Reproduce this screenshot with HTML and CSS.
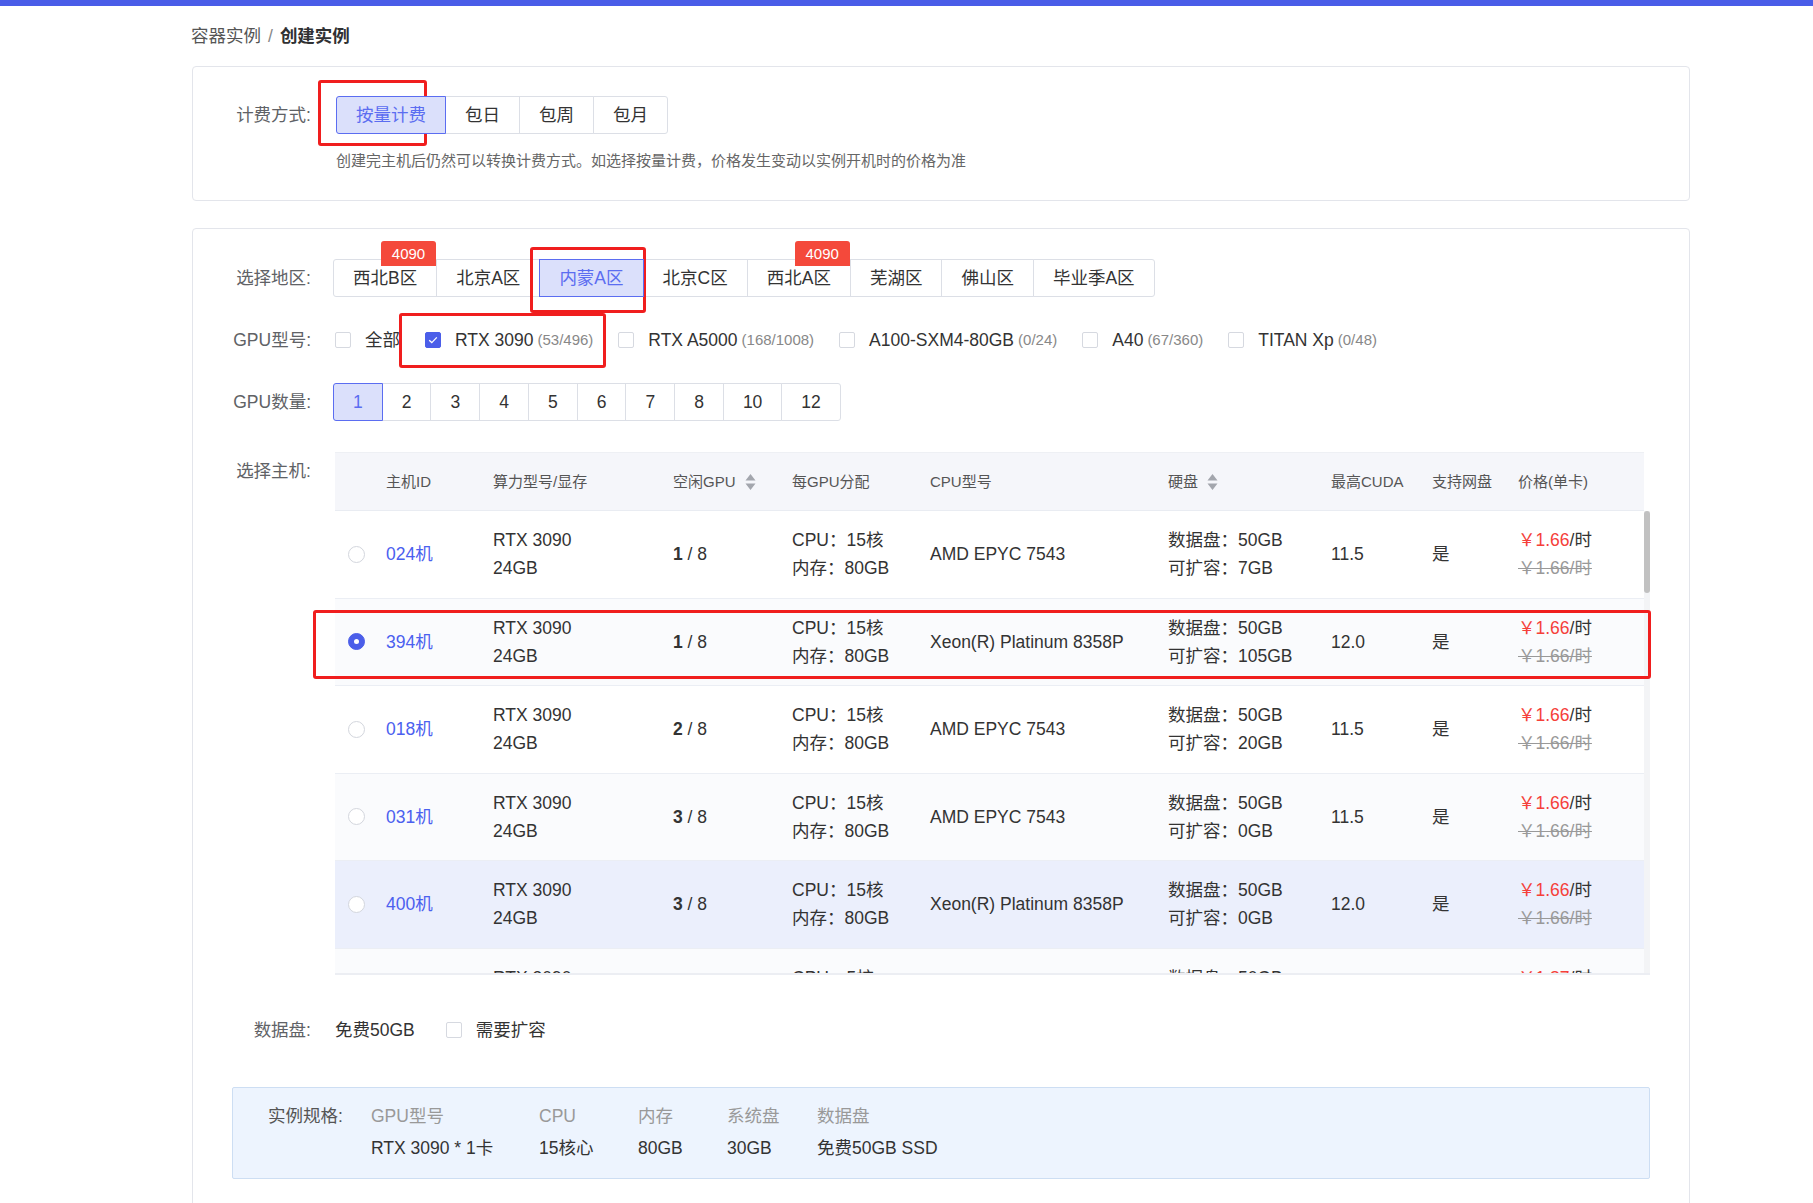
FILE: index.html
```html
<!DOCTYPE html>
<html lang="zh-CN">
<head>
<meta charset="utf-8">
<title>创建实例</title>
<link rel="stylesheet" href="styles.css">
</head>
<body>
<div class="topbar"></div>
<div class="page">
  <div class="breadcrumb"><span>容器实例</span><span class="sep">/</span><span class="cur">创建实例</span></div>

  <div class="card card-billing">
    <div class="form-row">
      <div class="form-label">计费方式:</div>
      <div class="form-content">
        <div class="btn-group">
          <span class="btn active">按量计费</span><span class="btn">包日</span><span class="btn">包周</span><span class="btn">包月</span>
        </div>
        <div class="note">创建完主机后仍然可以转换计费方式。如选择按量计费，价格发生变动以实例开机时的价格为准</div>
      </div>
    </div>
  </div>

  <div class="card card-main">
    <div class="form-row row-gap">
      <div class="form-label">选择地区:</div>
      <div class="btn-group">
        <span class="btn">西北B区<span class="badge">4090</span></span><span class="btn">北京A区</span><span class="btn active">内蒙A区</span><span class="btn">北京C区</span><span class="btn">西北A区<span class="badge">4090</span></span><span class="btn">芜湖区</span><span class="btn">佛山区</span><span class="btn">毕业季A区</span>
      </div>
    </div>

    <div class="form-row row-gap">
      <div class="form-label">GPU型号:</div>
      <div class="check-row">
        <label class="check"><span class="box"></span>全部</label>
        <label class="check"><span class="box checked"><svg width="10" height="8" viewBox="0 0 10 8"><path d="M1.2 4.2 L3.8 6.6 L8.8 1.4" fill="none" stroke="#fff" stroke-width="1.3"/></svg></span>RTX 3090<span class="count">(53/496)</span></label>
        <label class="check"><span class="box"></span>RTX A5000<span class="count">(168/1008)</span></label>
        <label class="check"><span class="box"></span>A100-SXM4-80GB<span class="count">(0/24)</span></label>
        <label class="check"><span class="box"></span>A40<span class="count">(67/360)</span></label>
        <label class="check"><span class="box"></span>TITAN Xp<span class="count">(0/48)</span></label>
      </div>
    </div>

    <div class="form-row row-gap-lg">
      <div class="form-label">GPU数量:</div>
      <div class="btn-group">
        <span class="btn active">1</span><span class="btn">2</span><span class="btn">3</span><span class="btn">4</span><span class="btn">5</span><span class="btn">6</span><span class="btn">7</span><span class="btn">8</span><span class="btn">10</span><span class="btn">12</span>
      </div>
    </div>

    <div class="form-row row-gap-table">
      <div class="form-label">选择主机:</div>
      <div class="table">
        <div class="thead">
          <div></div>
          <div>主机ID</div>
          <div>算力型号/显存</div>
          <div class="sortable">空闲GPU<svg class="sort" width="11" height="18" viewBox="0 0 11 18"><path d="M5.5 1 L10.5 7.5 L0.5 7.5 Z M5.5 17 L10.5 10.5 L0.5 10.5 Z" fill="#a3a6ad"/></svg></div>
          <div>每GPU分配</div>
          <div>CPU型号</div>
          <div class="sortable">硬盘<svg class="sort" width="11" height="18" viewBox="0 0 11 18"><path d="M5.5 1 L10.5 7.5 L0.5 7.5 Z M5.5 17 L10.5 10.5 L0.5 10.5 Z" fill="#a3a6ad"/></svg></div>
          <div>最高CUDA</div>
          <div>支持网盘</div>
          <div>价格(单卡)</div>
        </div>
        <div class="tbody-wrap">
          <div class="tbody">
            <div class="tr">
              <div><span class="radio"></span></div>
              <div class="link">024机</div>
              <div>RTX 3090<br>24GB</div>
              <div><b>1</b> / 8</div>
              <div>CPU：15核<br>内存：80GB</div>
              <div>AMD EPYC 7543</div>
              <div>数据盘：50GB<br>可扩容：7GB</div>
              <div>11.5</div>
              <div>是</div>
              <div><span class="price">￥1.66</span>/时<br><s class="old">￥1.66/时</s></div>
            </div>
            <div class="tr stripe">
              <div><span class="radio on"></span></div>
              <div class="link">394机</div>
              <div>RTX 3090<br>24GB</div>
              <div><b>1</b> / 8</div>
              <div>CPU：15核<br>内存：80GB</div>
              <div>Xeon(R) Platinum 8358P</div>
              <div>数据盘：50GB<br>可扩容：105GB</div>
              <div>12.0</div>
              <div>是</div>
              <div><span class="price">￥1.66</span>/时<br><s class="old">￥1.66/时</s></div>
            </div>
            <div class="tr">
              <div><span class="radio"></span></div>
              <div class="link">018机</div>
              <div>RTX 3090<br>24GB</div>
              <div><b>2</b> / 8</div>
              <div>CPU：15核<br>内存：80GB</div>
              <div>AMD EPYC 7543</div>
              <div>数据盘：50GB<br>可扩容：20GB</div>
              <div>11.5</div>
              <div>是</div>
              <div><span class="price">￥1.66</span>/时<br><s class="old">￥1.66/时</s></div>
            </div>
            <div class="tr stripe">
              <div><span class="radio"></span></div>
              <div class="link">031机</div>
              <div>RTX 3090<br>24GB</div>
              <div><b>3</b> / 8</div>
              <div>CPU：15核<br>内存：80GB</div>
              <div>AMD EPYC 7543</div>
              <div>数据盘：50GB<br>可扩容：0GB</div>
              <div>11.5</div>
              <div>是</div>
              <div><span class="price">￥1.66</span>/时<br><s class="old">￥1.66/时</s></div>
            </div>
            <div class="tr hover">
              <div><span class="radio"></span></div>
              <div class="link">400机</div>
              <div>RTX 3090<br>24GB</div>
              <div><b>3</b> / 8</div>
              <div>CPU：15核<br>内存：80GB</div>
              <div>Xeon(R) Platinum 8358P</div>
              <div>数据盘：50GB<br>可扩容：0GB</div>
              <div>12.0</div>
              <div>是</div>
              <div><span class="price">￥1.66</span>/时<br><s class="old">￥1.66/时</s></div>
            </div>
            <div class="tr stripe">
              <div><span class="radio"></span></div>
              <div class="link">052机</div>
              <div>RTX 3090<br>24GB</div>
              <div><b>4</b> / 8</div>
              <div>CPU：5核<br>内存：30GB</div>
              <div>AMD EPYC 7543</div>
              <div>数据盘：50GB<br>可扩容：0GB</div>
              <div>11.5</div>
              <div>是</div>
              <div><span class="price">￥1.87</span>/时<br><s class="old">￥1.87/时</s></div>
            </div>
          </div>
          <div class="vscroll"><div class="thumb"></div></div>
        </div>
      </div>
    </div>

    <div class="form-row">
      <div class="form-label">数据盘:</div>
      <div class="disk">
        <span>免费50GB</span>
        <label class="check disk-check"><span class="box"></span>需要扩容</label>
      </div>
    </div>

    <div class="spec">
      <div class="spec-label">实例规格:</div>
      <div class="spec-grid">
        <div class="k">GPU型号</div><div class="k">CPU</div><div class="k">内存</div><div class="k">系统盘</div><div class="k">数据盘</div>
        <div>RTX 3090 * 1卡</div><div>15核心</div><div>80GB</div><div>30GB</div><div>免费50GB SSD</div>
      </div>
    </div>
  </div>
</div>

<div class="mark mark-billing"></div>
<div class="mark mark-region"></div>
<div class="mark mark-gpu"></div>
<div class="mark mark-row"></div>
</body>
</html>
```

FILE: styles.css
```css
* { box-sizing: border-box; }
html, body { margin: 0; padding: 0; overflow: hidden; }
body {
  position: relative;
  width: 1813px;
  height: 1203px;
  background: #fff;
  color: #333;
  font-family: "Liberation Sans", "Noto Sans CJK SC", sans-serif;
  font-size: 17.5px;
  line-height: 1.6;
}
.topbar { height: 6px; background: #4a5de8; }
.page { width: 1498px; margin-left: 192px; }

.breadcrumb {
  margin-top: 18px;
  height: 24px;
  line-height: 24px;
  margin-left: -1px;
  color: #555;
}
.breadcrumb .sep { color: #888; margin: 0 7px; }
.breadcrumb .cur { font-weight: bold; color: #303133; }

.card {
  border: 1px solid #e3e5eb;
  border-radius: 4px;
  padding: 29px 40px;
}
.card-billing { margin-top: 18px; }
.card-main { margin-top: 27px; padding-top: 30px; }

.form-row { display: flex; align-items: flex-start; }
.row-gap { margin-bottom: 24px; }
.row-gap-lg { margin-bottom: 31px; }
.row-gap-table { margin-bottom: 36px; }
.form-label {
  flex: 0 0 102px;
  padding-right: 24px;
  text-align: right;
  line-height: 38px;
  color: #606266;
  white-space: nowrap;
}
.form-content { display: flex; flex-direction: column; }

.btn-group { display: flex; }
.btn {
  position: relative;
  height: 38px;
  line-height: 36px;
  padding: 0 19px;
  border: 1px solid #dcdfe6;
  background: #fff;
  color: #333;
  margin-left: -1px;
  white-space: nowrap;
}
.btn:first-child { margin-left: 0; border-radius: 3px 0 0 3px; }
.btn:last-child { border-radius: 0 3px 3px 0; }
.btn.active {
  background: #dbe0fb;
  border-color: #5b6df1;
  color: #5b6df1;
  z-index: 1;
}
.card-billing .btn-group { margin-left: 1px; }
.note {
  margin-top: 17px;
  font-size: 15px;
  line-height: 20px;
  color: #666;
  margin-left: 1px;
}

.badge {
  position: absolute;
  right: 0;
  top: -19px;
  height: 25px;
  line-height: 25px;
  padding: 0 11px;
  background: #f4493b;
  color: #fff;
  font-size: 15px;
  border-radius: 3px 3px 0 0;
}
.card-main .btn-group { margin-left: -2px; }

.check-row { display: flex; align-items: center; height: 38px; }
.check { display: flex; align-items: center; margin-right: 25px; white-space: nowrap; color: #333; }
.box {
  width: 16px;
  height: 16px;
  border: 1px solid #d6d9e0;
  border-radius: 2px;
  margin-right: 14px;
  background: #fff;
  display: flex;
  align-items: center;
  justify-content: center;
}
.box.checked { background: #4b5ee9; border-color: #4b5ee9; }
.count { font-size: 15px; color: #888; margin-left: 4px; }

/* table */
.table { width: 1315px; }
.thead, .tr {
  display: grid;
  grid-template-columns: 51px 107px 180px 119px 138px 238px 163px 101px 86px 126px;
  align-items: center;
}
.thead {
  width: 1309px;
  height: 59px;
  background: #f5f6fa;
  border-top: 1px solid #eef0f4;
  border-bottom: 1px solid #e9ecf2;
  font-size: 15px;
  color: #555;
  white-space: nowrap;
}
.sortable { display: flex; align-items: center; }
.sort { margin-left: 9px; }
.tbody-wrap {
  display: flex;
  height: 464px;
  border-bottom: 2px solid #eceef3;
}
.tbody { width: 1309px; overflow: hidden; }
.vscroll { width: 6px; background: #f3f4f6; }
.thumb { height: 82px; background: #c1c1c1; border-radius: 3px; }
.tr {
  height: 87.5px;
  line-height: 28px;
  border-bottom: 1px solid #ebeef4;
  background: #fff;
  white-space: nowrap;
}
.tr.stripe { background: #fafbfd; }
.tr.hover { background: #ebeffc; }
.tr b { font-weight: bold; }
.radio {
  display: block;
  width: 17px;
  height: 17px;
  margin-left: 13px;
  border: 1px solid #d3d6dd;
  border-radius: 50%;
  background: #fff;
}
.radio.on {
  background: #4b5ee9;
  border-color: #4b5ee9;
  position: relative;
}
.radio.on::after {
  content: "";
  position: absolute;
  left: 50%;
  top: 50%;
  width: 5px;
  height: 5px;
  margin: -2.5px 0 0 -2.5px;
  border-radius: 50%;
  background: #fff;
}
.link { color: #4b60ef; }
.price { color: #f5403a; }
.old { color: #999; text-decoration: line-through; }

/* data disk */
.disk { display: flex; align-items: center; height: 38px; }
.disk-check { margin-left: 31px; }

/* spec */
.spec {
  display: flex;
  margin: 38px -1px 0;
  border: 1px solid #cddef3;
  border-radius: 2px;
  background: #edf4fe;
  padding: 12px 36px 14px 35px;
  line-height: 32px;
}
.spec-label { flex: 0 0 103px; color: #555; }
.spec-grid {
  display: grid;
  grid-template-columns: 168px 99px 89px 90px auto;
  white-space: nowrap;
}
.spec-grid .k { color: #999; }

/* red annotation marks over the screenshot */
.mark {
  position: absolute;
  border: 3px solid #f01e1e;
  border-radius: 3px;
}
.mark-billing { left: 318px; top: 80px; width: 109px; height: 66px; }
.mark-region { left: 530px; top: 247px; width: 116px; height: 66px; }
.mark-gpu { left: 399px; top: 313px; width: 207px; height: 55px; }
.mark-row { left: 313px; top: 610px; width: 1338px; height: 69px; }
```
